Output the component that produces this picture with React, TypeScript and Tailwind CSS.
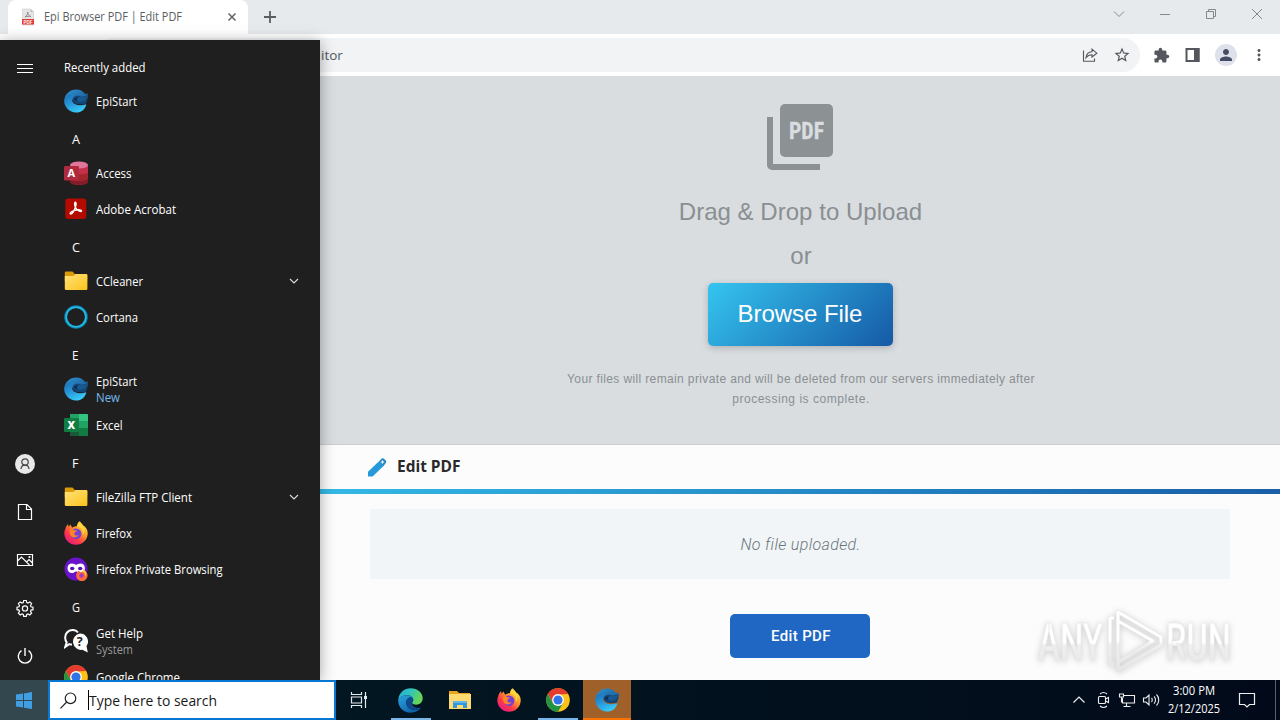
import type { ReactNode } from "react";
import { MdExtension, MdMoreVert, MdPerson, MdStarOutline } from "react-icons/md";

type Row = {
  label: string;
  icon?: ReactNode;
  sub?: string;
  subColor?: string;
  folder?: boolean;
  width: number;
};

function EpiIcon({ size = 24 }: { size?: number }) {
  return (
    <svg width={size} height={size} viewBox="0 0 24 24">
      <defs>
        <linearGradient id="epiTop" x1="0" y1="0" x2="1" y2="1">
          <stop offset="0" stopColor="#2f93d3" />
          <stop offset="1" stopColor="#17528d" />
        </linearGradient>
        <linearGradient id="epiLow" x1="0" y1="0" x2=".6" y2="1">
          <stop offset="0" stopColor="#1d6eb4" />
          <stop offset=".5" stopColor="#2797d8" />
          <stop offset="1" stopColor="#37cbf8" />
        </linearGradient>
      </defs>
      <path d="M.6 9C2.500 3.500 7 .5 12 .5c4.500 0 7.500 2 9 4.500l2.600-.4c.4 4-.3 7-2.100 10H12L7 10z" fill="url(#epiTop)" />
      <path d="M.3 10C2.500 6 7 4.800 11 6c-3.500 1.200-4 5-2 7.500 2.500 3 7 3.300 13.300 1.700-.8 4.800-4.800 8.300-10.300 8.300C5 23.500-.8 17.500.3 10z" fill="url(#epiLow)" />
      <path d="M9.500 8.500c1.700-2.200 5.500-2.300 8-.8l5.900-1.200c.1 3-.4 6-1.900 8.200-5.500 1-10.700.6-12.500-2.400-.5-1.200-.2-2.700.5-3.800z" fill="#134677" />
      <path d="M11.500 9.500c2-1.600 4-1.700 6-1.200l5.700-1c-.5 2.700-2 4.500-4.700 5.200-3 .7-6 .3-7-3z" fill="#1a5990" />
      <path d="M10 10c1-1.500 3-2 4.500-1.500-1.500.5-2 2-1 3.300-2 .5-3.500-.3-3.500-1.800z" fill="#0c3158" />
    </svg>
  );
}

function AccessIcon() {
  return (
    <svg width="24" height="24" viewBox="0 0 24 24">
      <path d="M6 4v16.500c0 2 4 3.500 9 3.500s9-1.500 9-3.500V4z" fill="#a4262c" />
      <path d="M6 4v7c3 3 14 3 18 1V4z" fill="#c5314b" />
      <path d="M6 18c4 3 14 3 18 0v3c-3 4-15 4-18 0z" fill="#831b2b" />
      <ellipse cx="15" cy="4" rx="9" ry="3.600" fill="#e0779a" />
      <rect y="5" width="15" height="14.500" rx="1.200" fill="#b02a3d" />
      <text x="7.200" y="16.200" textAnchor="middle" fontSize="11" fontWeight="700" fill="#fff" fontFamily="Open Sans, sans-serif">A</text>
    </svg>
  );
}

function AcrobatIcon() {
  return (
    <svg width="24" height="24" viewBox="0 0 24 24">
      <rect x="1.300" y="1.500" width="21" height="20.500" rx="3" fill="#b30b00" />
      <path
        d="M11.200 5.200c1.500 0 .8 3.300.1 5.300-1 2.800-3 6.500-4.600 6.500-1.500-.3.500-2.900 4.600-3.800 3-.7 6.400-.4 6.300.8-.2 1.300-3.900-.1-5.600-2.700-1.500-2.200-1.900-5.900-.8-6.100z"
        fill="none"
        stroke="#fff"
        strokeWidth="1.400"
      />
    </svg>
  );
}

function FolderIcon() {
  return (
    <svg width="24" height="24" viewBox="0 0 24 24">
      <defs>
        <linearGradient id="folder" x1="0" y1="0" x2="1" y2="1">
          <stop offset="0" stopColor="#ffe27a" />
          <stop offset="1" stopColor="#fcc21c" />
        </linearGradient>
      </defs>
      <path d="M.8 4c0-1 .5-1.500 1.400-1.500h6.200L10.900 5h11c.8 0 1.300.5 1.300 1.300V12H.8z" fill="#d99b08" />
      <path d="M.8 7h8.500l2.500-2h10.300c.8 0 1.300.5 1.300 1.300v13.100c0 1-.6 1.600-1.500 1.600H2.200c-.9 0-1.400-.6-1.400-1.500z" fill="url(#folder)" />
    </svg>
  );
}

function CortanaIcon() {
  return (
    <svg width="24" height="24" viewBox="0 0 24 24" fill="none">
      <circle cx="12" cy="12" r="10.400" stroke="#087cad" strokeWidth="2.800" />
      <circle cx="12" cy="12" r="9.900" stroke="#25b9df" strokeWidth="1.700" />
    </svg>
  );
}

function ExcelIcon() {
  return (
    <svg width="24" height="24" viewBox="0 0 24 24">
      <path d="M6 1h9v7H6z" fill="#21a366" />
      <path d="M15 1h8q1 0 1 1v6h-9z" fill="#33c481" />
      <path d="M6 8h9v7H6z" fill="#107c41" />
      <path d="M15 8h9v7h-9z" fill="#21a366" />
      <path d="M6 15h18v7q0 1-1 1H7q-1 0-1-1z" fill="#185c37" />
      <path d="M15 15h9v7q0 1-1 1h-8z" fill="#107c41" />
      <rect y="5" width="15" height="14" rx="1" fill="#117d43" />
      <text x="7.300" y="15.700" textAnchor="middle" fontSize="10.500" fontWeight="800" fill="#fff" fontFamily="Open Sans, sans-serif">X</text>
    </svg>
  );
}

function FirefoxIcon({ size = 24 }: { size?: number }) {
  return (
    <svg width={size} height={size} viewBox="0 0 24 24">
      <defs>
        <linearGradient id="fox" x1="1" y1="0" x2=".2" y2="1">
          <stop offset="0" stopColor="#fff44f" />
          <stop offset=".4" stopColor="#ffa12b" />
          <stop offset=".7" stopColor="#ff3b48" />
          <stop offset="1" stopColor="#e31587" />
        </linearGradient>
      </defs>
      <path
        d="M22.900 8.600c-.8-1.800-2-3.200-3.200-4l.8 2C19.300 3.700 17 2.400 15.800.3 13.500 1.300 13 4 13 5.300c-2-.2-3.300.5-4.300 1.200-1-.3-1.700-1.300-1.800-3-.9.500-1.700 1.400-2.200 2.100-.5-.4-.6-1.500-.5-2.600C2.800 4 1.700 6 1.300 8c-.7 1.200-1 2.700-1 4.500C.5 19 5.700 23.800 12 23.800c6.300 0 11.600-4.800 11.700-11.300 0-1.400-.3-2.800-.8-3.900z"
        fill="url(#fox)"
      />
      <circle cx="12" cy="12.800" r="5.400" fill="#7540d5" />
      <path d="M6 8.500c2-.8 3.600 0 4.300.9 1.400-.3 2.300 0 2.800.5-1.300.6-1.900 1.200-2.700 2.100-.5 2.500 2 3.200 4.200 2-1.500 3-6 3.500-8 .3C5.500 12 5.500 10 6 8.500z" fill="#ff8428" />
      <path d="M13 5.500c4.500.5 6.500 4 5.600 8.300 3-3 2.500-7-.1-9.800L15.800.8C14 2 13.300 4 13 5.500z" fill="#ffd63d" />
    </svg>
  );
}

function PrivateIcon() {
  return (
    <svg width="24" height="24" viewBox="0 0 24 24">
      <circle cx="12" cy="12" r="11.500" fill="#6a14c9" />
      <path
        d="M8 6.600c2 0 3 1.200 4.200 1.200s2.200-1.200 4.200-1.200c2.800 0 4.500 2 4.500 4.700 0 2.900-1.900 4.800-4.400 4.800-2 0-3-1.700-4.300-1.700s-2.300 1.700-4.300 1.700c-2.500 0-4.400-1.900-4.400-4.800C3.500 8.600 5.200 6.600 8 6.600z"
        fill="#fff"
      />
      <ellipse cx="8.200" cy="11.500" rx="2.200" ry="1.700" fill="#5a12b4" />
      <ellipse cx="16.200" cy="11.500" rx="2.200" ry="1.700" fill="#5a12b4" />
      <g transform="translate(12 12) scale(.5)">
        <path d="M22 8 15.800.3 13 5 9 6.500 5 3 1 9c-3 8 4 15 11 15s14-8 10-16z" fill="#ff6b3a" />
        <circle cx="11" cy="13" r="4.500" fill="#a23bc0" />
        <path d="M13 5.500c5 1 6 5 5 9 4-3 3-8-2.200-13.500z" fill="#ffd63d" />
      </g>
    </svg>
  );
}

function HelpIcon() {
  return (
    <svg width="24" height="24" viewBox="0 0 24 24">
      <path d="M8 15.500c-1.500.2-2.200 0-2.800-.3L1.200 18l1.500-4.600C.5 10.500.8 6 3 3.500c3-3.400 8.500-3.300 11 0" fill="none" stroke="#fff" strokeWidth="2" />
      <path d="M16 4.500a8 8 0 0 1 6.500 12.600l1.300 6.400-5.400-2.700A8 8 0 1 1 16 4.500z" fill="#fff" />
      <text x="15.800" y="17.300" textAnchor="middle" fontSize="12.500" fontWeight="700" fill="#1f1f1f" fontFamily="Open Sans, sans-serif">?</text>
    </svg>
  );
}

function ChromeIcon() {
  return (
    <svg width="24" height="24" viewBox="0 0 24 24">
      <circle cx="12" cy="12" r="11.800" fill="#fbc116" />
      <path d="M1.780 6.100A11.800 11.800 0 0 1 22.220 6.100L12 6.400 7 15z" fill="#e33b2e" />
      <path d="M1.780 6.100A11.800 11.800 0 0 0 12 23.800l5.100-8.800-10.200.2z" fill="#229342" />
      <circle cx="12" cy="12" r="5.900" fill="#fff" />
      <circle cx="12" cy="12" r="4.600" fill="#2f74e8" />
    </svg>
  );
}

function EdgeIcon() {
  return (
    <svg width="25" height="25" viewBox="0 0 24 24">
      <defs>
        <linearGradient id="edgeTop" x1="0" y1="0" x2="1" y2=".4">
          <stop offset="0" stopColor="#28a9d9" />
          <stop offset=".5" stopColor="#2fc5bd" />
          <stop offset="1" stopColor="#67d654" />
        </linearGradient>
        <linearGradient id="edgeLow" x1="0" y1="0" x2=".8" y2="1">
          <stop offset="0" stopColor="#2ba6e0" />
          <stop offset="1" stopColor="#0c59a4" />
        </linearGradient>
      </defs>
      <path d="M.3 11C1 4.500 6 .3 12 .3c7 0 11.700 4.500 11.700 9.500 0 4-3 6.200-6.200 6.200-2.500 0-4-.9-4-1.800 0-.6 1.100-1 1.100-2.700 0-2.500-2.500-4.500-6-4.500C5 7 2 8.500.3 11z" fill="url(#edgeTop)" />
      <path d="M.3 11C1.500 8.500 5 6.800 8.600 7c3.500 0 6 2 6 4.500 0-1.400-1-2.500-2.400-2.500C9.500 9 8 11.500 8 14c0 5 5 7.500 9 7 2-.2 3.500-1.200 4.800-1.800C20 22 16 23.700 12 23.700 5 23.700-.4 18 .3 11z" fill="url(#edgeLow)" />
      <path d="M12.200 9C9.500 9 7.800 11.500 8 14.500c.3 4.500 5 7.100 9 6.500 2-.3 4-1.200 5-2.500-4 1.500-8.500-.5-8.500-4.300 0-.6 1.100-1 1.100-2.700 0-1.500-1-2.500-2.400-2.500z" fill="#114a8b" />
    </svg>
  );
}

const rows: Row[] = [
  { label: "Recently added", width: 81.5 },
  { label: "EpiStart", icon: <EpiIcon />, width: 41 },
  { label: "A", width: 8 },
  { label: "Access", icon: <AccessIcon />, width: 35.5 },
  { label: "Adobe Acrobat", icon: <AcrobatIcon />, width: 80 },
  { label: "C", width: 8 },
  { label: "CCleaner", icon: <FolderIcon />, folder: true, width: 47 },
  { label: "Cortana", icon: <CortanaIcon />, width: 42 },
  { label: "E", width: 6.5 },
  { label: "EpiStart", icon: <EpiIcon />, sub: "New", subColor: "text-[#76b9ed]", width: 41 },
  { label: "Excel", icon: <ExcelIcon />, width: 26.5 },
  { label: "F", width: 6.5 },
  { label: "FileZilla FTP Client", icon: <FolderIcon />, folder: true, width: 96 },
  { label: "Firefox", icon: <FirefoxIcon />, width: 36 },
  { label: "Firefox Private Browsing", icon: <PrivateIcon />, width: 126.5 },
  { label: "G", width: 8 },
  { label: "Get Help", icon: <HelpIcon />, sub: "System", subColor: "text-[#9a9a9a]", width: 47 },
  { label: "Google Chrome", icon: <ChromeIcon />, width: 84 },
];

// Menu label squeezed to the width the narrower system font takes
function MenuLabel({ text, width }: { text: string; width: number }) {
  return (
    <svg width={width} height="16" className="block overflow-visible">
      <text x="0" y="12" fontSize="12.200" fill="currentColor" textLength={width} lengthAdjust="spacingAndGlyphs">
        {text}
      </text>
    </svg>
  );
}

function StartMenu() {
  return (
    <aside className="absolute left-0 top-10 z-20 flex h-[640px] w-80 overflow-hidden bg-[#1f1f1f] text-white shadow-[0_2px_14px_rgba(0,0,0,0.35)]">
      <nav className="flex w-[50px] flex-col items-center justify-between pb-3 pt-5">
        <svg width="16" height="17" viewBox="0 0 16 17" stroke="#fff">
          <path d="M0 4.500h16M0 8.500h16M0 12.500h16" />
        </svg>
        <div className="flex flex-col items-center gap-6">
          <div className="-my-[2px] flex h-7 items-center">
            <svg width="20" height="20" viewBox="0 0 20 20" fill="none" stroke="#444" strokeWidth="1.200">
              <circle cx="10" cy="10" r="10" fill="#e8e8e8" stroke="none" />
              <circle cx="10" cy="8" r="3.200" />
              <path d="M6 15c.3-2.500 2-3.800 4-3.800s3.700 1.300 4 3.800" />
            </svg>
          </div>
          <svg width="24" height="24" viewBox="0 0 24 24" fill="none" stroke="#fff" strokeWidth="1.200">
            <path d="M5.500 4.500h8.500l4.500 4.500v10.500h-13zM13.500 4.500v5h5" />
          </svg>
          <svg width="24" height="24" viewBox="0 0 24 24" fill="none" stroke="#fff" strokeWidth="1.200">
            <path d="M4.500 6.500h15v11h-15zM4.500 13l4-4 8 8M13.500 14l2.500-2.500 3.500 3.500" />
            <circle cx="16.500" cy="9" r=".5" />
          </svg>
          <svg width="24" height="24" viewBox="0 0 24 24" fill="none" stroke="#fff" strokeWidth="1.200">
            <path d="M10.700 4.500h2.600l.4 2 1.300.5 1.800-1.100 1.800 1.800L17.500 9.500l.5 1.300 2 .4v2.500l-2 .4-.5 1.300 1.100 1.800-1.800 1.800-1.800-1.100-1.300.5-.4 2h-2.600l-.4-2-1.300-.5-1.800 1.100-1.800-1.800 1.100-1.800-.5-1.300-2-.4v-2.500l2-.4.5-1.300-1.100-1.800 1.800-1.800L9 7l1.300-.5z" />
            <circle cx="12" cy="12.400" r="2.600" />
          </svg>
          <svg width="24" height="24" viewBox="0 0 24 24" fill="none" stroke="#fff" strokeWidth="1.400">
            <path d="M12 4v8M8.500 6.700a6.700 6.700 0 1 0 7 0" />
          </svg>
        </div>
      </nav>
      <ul className="flex flex-1 flex-col pt-[7px] font-['Open_Sans',sans-serif]">
        {rows.map((row, i) => (
          <li key={i} className="flex h-9 shrink-0 items-center pl-3.5 pr-5">
            {row.icon ? (
              <>
                <span className="w-8">{row.icon}</span>
                <div className="flex-1 pt-px">
                  <MenuLabel text={row.label} width={row.width} />
                  {row.sub && (
                    <div className={row.subColor}>
                      <MenuLabel text={row.sub} width={row.sub === "New" ? 24 : 37} />
                    </div>
                  )}
                </div>
                {row.folder && (
                  <svg width="12" height="12" viewBox="0 0 12 12" fill="none" stroke="#ddd" strokeWidth="1.100">
                    <path d="m2 4 4 4 4-4" />
                  </svg>
                )}
              </>
            ) : (
              <div className={i === 0 ? "pt-[5px]" : "pl-2 pt-[5px]"}>
                <MenuLabel text={row.label} width={row.width} />
              </div>
            )}
          </li>
        ))}
      </ul>
    </aside>
  );
}

function TabStrip() {
  return (
    <div className="flex h-[34px] shrink-0 bg-[#e7eaed]">
      <div className="ml-2 flex h-full w-60 items-center rounded-t-lg bg-white pl-3 pr-2.5">
        <svg width="16" height="18" viewBox="0 0 16 18">
          <path d="M2.500 1h8l3 3v13h-11z" fill="#e5e5e5" stroke="#c9c9c9" strokeWidth=".6" />
          <path d="M10.500 1v3h3" fill="#bbb" />
          <path d="M5 9c2-1.500 3-3.500 2.700-5C7.500 6 9 8 11 8.500 9 8 7 8.300 5 9z" fill="none" stroke="#888" />
          <rect x="2" y="11" width="12" height="5.500" rx=".6" fill="#e03a32" />
          <text x="8" y="15.500" fontSize="4.500" fontWeight="700" fill="#fff" textAnchor="middle" fontFamily="Liberation Sans, sans-serif">PDF</text>
        </svg>
        <svg width="140" height="16" className="ml-2 overflow-visible font-['Open_Sans',sans-serif]">
          <text x="0" y="12" fontSize="12" fill="#5a5e63" textLength="138" lengthAdjust="spacingAndGlyphs">
            Epi Browser PDF | Edit PDF
          </text>
        </svg>
        <svg width="12" height="12" viewBox="0 0 12 12" className="ml-auto" stroke="#5f6368" strokeWidth="1.500">
          <path d="m2.500 2.500 7 7m0-7-7 7" />
        </svg>
      </div>
      <svg width="14" height="14" viewBox="0 0 14 14" className="ml-[15px] mt-2.5" stroke="#5a5d62" strokeWidth="1.800">
        <path d="M7 1v12M1 7h12" />
      </svg>
      <div className="ml-auto mr-4 flex h-7 items-center gap-8 text-[#85898d]">
        <svg width="14" height="14" viewBox="0 0 14 14" fill="none" stroke="currentColor">
          <path d="m2 4.500 5 5 5-5" />
        </svg>
        <svg width="14" height="14" viewBox="0 0 14 14" fill="none" stroke="currentColor">
          <path d="M2 7.500h10" />
        </svg>
        <svg width="14" height="14" viewBox="0 0 14 14" fill="none" stroke="currentColor">
          <path d="M2.500 4.500h7v7h-7zM4.500 4.500v-2h7v7h-2" />
        </svg>
        <svg width="14" height="14" viewBox="0 0 14 14" fill="none" stroke="currentColor">
          <path d="m2 2 10 10m0-10L2 12" />
        </svg>
      </div>
    </div>
  );
}

function Toolbar() {
  return (
    <div className="flex h-[42px] shrink-0 items-center bg-white">
      <div className="ml-24 flex h-[34px] w-[1044px] items-center justify-end gap-[15px] rounded-full bg-[#f1f3f5] pr-[9px] text-[#54585e]">
        <span className="mr-auto pl-[225px] font-['Open_Sans',sans-serif] text-[13.500px] leading-5 text-[#55595d]">itor</span>
        <svg width="16" height="16" viewBox="0 0 16 16" fill="none" stroke="currentColor" strokeWidth="1.100">
          <path d="M1.500 3.500v10.800h11v-2.800" />
          <path d="M10 2.200 14.800 6.200 10 10V7.800c-3 0-4.500.8-6 3 .3-3.500 2.300-5.800 6-6z" />
        </svg>
        <MdStarOutline size={18} />
      </div>
      <div className="ml-[13px] flex items-center gap-[14px] text-[#54585e]">
        <MdExtension size={17} />
        <svg width="17" height="16" viewBox="0 0 17 16">
          <path d="M2.500 2h12v12h-12z" fill="none" stroke="currentColor" strokeWidth="2" />
          <path d="M10 1h5.500v14H10z" fill="currentColor" />
        </svg>
        <div className="flex size-[22px] items-center justify-center rounded-full bg-[#dfe1ea] text-[#454b62]">
          <MdPerson size={18} />
        </div>
        <MdMoreVert size={18} className="-ml-px" />
      </div>
    </div>
  );
}

function UploadPanel() {
  return (
    <section className="flex h-[369px] shrink-0 flex-col items-center border-b border-[#c9cdd0] bg-[#d9dde0] pl-80 pt-7 font-['Liberation_Sans',Arial,sans-serif] text-[#8a8f92]">
      <div className="flex w-[960px] flex-col items-center">
        <svg width="66" height="66" viewBox="0 0 66 66" fill="#8c9194">
          <path d="M0 13h6v47h47v6H5a5 5 0 0 1-5-5z" />
          <rect x="13" width="53" height="53" rx="5" />
          <text x="22" y="34.500" fontSize="24" fontWeight="700" fill="#d9dde0" stroke="#d9dde0" strokeWidth=".3" textLength="35" fontFamily="Roboto Condensed, Liberation Sans Narrow, Roboto, sans-serif" lengthAdjust="spacingAndGlyphs">PDF</text>
        </svg>
        <p className="ml-px mt-6 text-2xl leading-9 tracking-[0.03px]">Drag &amp; Drop to Upload</p>
        <p className="ml-0.5 mt-2 text-2xl leading-9">or</p>
        <button className="mt-[9px] h-[63px] w-[185px] rounded-[5px] bg-linear-[135deg,#35c5f0,#1559a5] pb-0.5 text-2xl tracking-[-0.05px] text-white shadow-[0_2px_7px_rgba(0,0,0,0.2)]">
          Browse File
        </button>
        <p className="ml-0.5 mt-[23px] w-[490px] text-center text-xs leading-5 tracking-[0.37px]">
          Your files will remain private and will be deleted from our servers immediately after{" "}
          <span className="tracking-[0.53px]">processing is complete.</span>
        </p>
      </div>
    </section>
  );
}

function EditPanel() {
  return (
    <section className="flex flex-1 flex-col bg-[#fcfcfc] pl-80">
      <div className="flex h-11 items-center gap-2.5 pl-12">
        <svg width="19" height="19" viewBox="0 0 19 19">
          <path d="M0 18.500v-4.800L11.300 2.900l4.700 4.700L4.600 18.500z" fill="#2599da" />
          <path d="m11.300 2.900 2.200-2.200c.8-.6 1.700-.6 2.500 0l1.800 1.800c.6.800.6 1.600 0 2.400L15.500 8z" fill="#2c8bc4" />
          <path d="M14.500 2.500v3M13 4h3" stroke="#fcfcfc" />
        </svg>
        <svg width="65" height="20" className="overflow-visible">
          <text x="0" y="15" fontSize="16" fontWeight="700" fill="#292929" textLength="63.500" lengthAdjust="spacingAndGlyphs" fontFamily="Open Sans, sans-serif">Edit PDF</text>
        </svg>
      </div>
      <div className="h-[5px] bg-linear-to-r from-[#34b9e6] to-[#1a5ea8]" />
      <div className="mx-[50px] mt-[15px] flex h-[70px] items-center justify-center bg-[#f1f5f8] pl-px pt-0.5 font-['Roboto',sans-serif] text-base font-light italic tracking-[0.35px] text-[#6c757d]">
        No file uploaded.
      </div>
      <button className="mt-[35px] h-11 w-[140px] self-center rounded-[5px] bg-[#1f67c2] pl-0.5 font-['Roboto',sans-serif] text-[15px] font-medium tracking-[0.35px] text-white">
        Edit PDF
      </button>
    </section>
  );
}

function Watermark() {
  return (
    <svg width="206" height="74" viewBox="0 0 206 74" className="absolute left-[1034px] top-[605px] z-10 overflow-visible drop-shadow-[0_1px_3px_rgba(0,0,0,0.2)]">
      <defs>
        <linearGradient id="mark" x1="0" y1="0" x2="0" y2="1">
          <stop offset=".5" stopColor="#fff" />
          <stop offset=".55" stopColor="#efefef" />
          <stop offset="1" stopColor="#e6e6e6" />
        </linearGradient>
      </defs>
      <g fontFamily="Roboto, sans-serif" fontSize="51" fontWeight="500" fill="url(#mark)" stroke="#e6e6e6" strokeWidth=".6">
        <text x="4" y="55" textLength="65" lengthAdjust="spacingAndGlyphs">ANY</text>
        <text x="132" y="55" textLength="65" lengthAdjust="spacingAndGlyphs">RUN</text>
      </g>
      <g fill="none" strokeLinejoin="round">
        <path d="M80 13h-4v46h4M84 57V7l43 25v8L84 65v-8l35-21-35-20" stroke="#e2e2e2" strokeWidth="4" />
        <path d="M80 13h-4v46h4M84 57V7l43 25v8L84 65v-8l35-21-35-20" stroke="url(#mark)" strokeWidth="3" />
      </g>
    </svg>
  );
}

function Taskbar() {
  return (
    <footer className="z-30 flex h-10 shrink-0 bg-linear-to-r from-[#021b24] to-[#020a1a] font-['Open_Sans',sans-serif] text-white">
      <div className="flex w-12 items-center justify-center bg-[#33474f]">
        <svg width="16" height="17" viewBox="0 0 16 17" fill="#409fe3">
          <path d="M0 2.500 7 1.500V8H0zM8 1.400 16 0v8H8zM0 9h7v6.500l-7-1zM8 9h8v8l-8-1.200z" />
        </svg>
      </div>
      <div className="flex w-72 items-center border-2 border-[#0878d3] bg-white pl-2.5">
        <svg width="17" height="17" viewBox="0 0 17 17" fill="none" stroke="#222" strokeWidth="1.200">
          <circle cx="10.500" cy="6.300" r="5.300" />
          <path d="M6.700 10 .5 16.300" />
        </svg>
        <span className="ml-[11px] h-5 w-px bg-black" />
        <svg width="130" height="20" className="overflow-visible">
          <text x="0" y="16" fontSize="15" fill="#191919" textLength="128" lengthAdjust="spacingAndGlyphs">Type here to search</text>
        </svg>
      </div>
      <div className="flex">
        <div className="flex w-[50px] items-center justify-center pr-1">
          <svg width="18" height="16" viewBox="0 0 18 16" fill="none" stroke="#e5eaec" strokeWidth="1.200">
            <path d="M1.500 0v2.500h10V0M1.500 5h10v6h-10zM1.500 16v-2.500h10V16M15.500 0v16" />
            <path d="M14 5.500h3" strokeWidth="3" />
          </svg>
        </div>
        <div className="flex w-[49px] items-center justify-center bg-[linear-gradient(#7ab5ea,#7ab5ea)] bg-[length:40px_2px] bg-bottom bg-no-repeat">
          <EdgeIcon />
        </div>
        <div className="flex w-[49px] items-center justify-center">
          <svg width="22" height="20" viewBox="0 0 22 20">
            <path d="M0 1h8l2 2h11v8H0z" fill="#e9a51d" />
            <path d="M0 4h22v15H0z" fill="#ffdb71" />
            <path d="M4 11h14v7h-4v-3H8v3H4z" fill="#3297dd" />
            <path d="M4 11h14v2H4z" fill="#5eb5e6" />
          </svg>
        </div>
        <div className="flex w-[49px] items-center justify-center">
          <FirefoxIcon />
        </div>
        <div className="flex w-[49px] items-center justify-center bg-[linear-gradient(#7ab5ea,#7ab5ea)] bg-[length:40px_2px] bg-bottom bg-no-repeat">
          <ChromeIcon />
        </div>
        <div className="ml-px flex w-12 items-center justify-center border-b-2 border-[#ff7200] bg-[#a06029] pt-0.5">
          <EpiIcon />
        </div>
      </div>
      <div className="ml-auto flex items-center">
        <svg width="14" height="14" viewBox="0 0 14 14" fill="none" stroke="#eee" strokeWidth="1.200">
          <path d="m1.500 9.500 5.500-5.500 5.500 5.500" />
        </svg>
        <svg width="14" height="18" viewBox="0 0 14 18" className="ml-[11px]" fill="none" stroke="#eee" strokeWidth="1.100">
          <rect x="1.500" y="5.500" width="7" height="7" rx="1" />
          <path d="m8.500 8 3-1.500v5l-3-1.500M3 3c2-1.700 5-1.700 7 0M3 15c2 1.700 5 1.700 7 0" />
        </svg>
        <svg width="18" height="16" viewBox="0 0 18 16" className="ml-[7px]" fill="none" stroke="#eee" strokeWidth="1.100">
          <path d="M6 3.500h10.500v7.500H4.500V6M8.500 11v3M5.500 14.500h7M1.500 2h4v3h-4zM3.500 5v5.500" />
        </svg>
        <svg width="18" height="16" viewBox="0 0 18 16" className="ml-1.5" fill="none" stroke="#eee" strokeWidth="1.100">
          <path d="M1.500 6h2.500l3-3v10l-3-3H1.500zM9.500 6c1 1 1 3 0 4M12 4.300c2 2 2 5.400 0 7.400M14.500 2.500c3 3 3 8 0 11" />
        </svg>
        <div className="ml-2 flex flex-col items-center pt-0.5">
          <svg width="43" height="18" className="overflow-visible">
            <text x="0" y="12" fontSize="12" fill="#fff" textLength="42" lengthAdjust="spacingAndGlyphs">3:00 PM</text>
          </svg>
          <svg width="53" height="18" className="overflow-visible">
            <text x="0" y="12" fontSize="12" fill="#fff" textLength="52" lengthAdjust="spacingAndGlyphs">2/12/2025</text>
          </svg>
        </div>
        <svg width="18" height="18" viewBox="0 0 18 18" className="ml-[17px]" fill="none" stroke="#eee" strokeWidth="1.200">
          <path d="M1.500 2.500h15v11h-5L9 16l-2.500-2.500h-5z" />
        </svg>
        <div className="ml-[19px] h-10 w-[5px] border-l border-[#55616d]" />
      </div>
    </footer>
  );
}

export default function App() {
  return (
    <div className="relative flex h-[720px] w-[1280px] flex-col overflow-hidden bg-white">
      <TabStrip />
      <Toolbar />
      <UploadPanel />
      <EditPanel />
      <Watermark />
      <StartMenu />
      <Taskbar />
    </div>
  );
}
